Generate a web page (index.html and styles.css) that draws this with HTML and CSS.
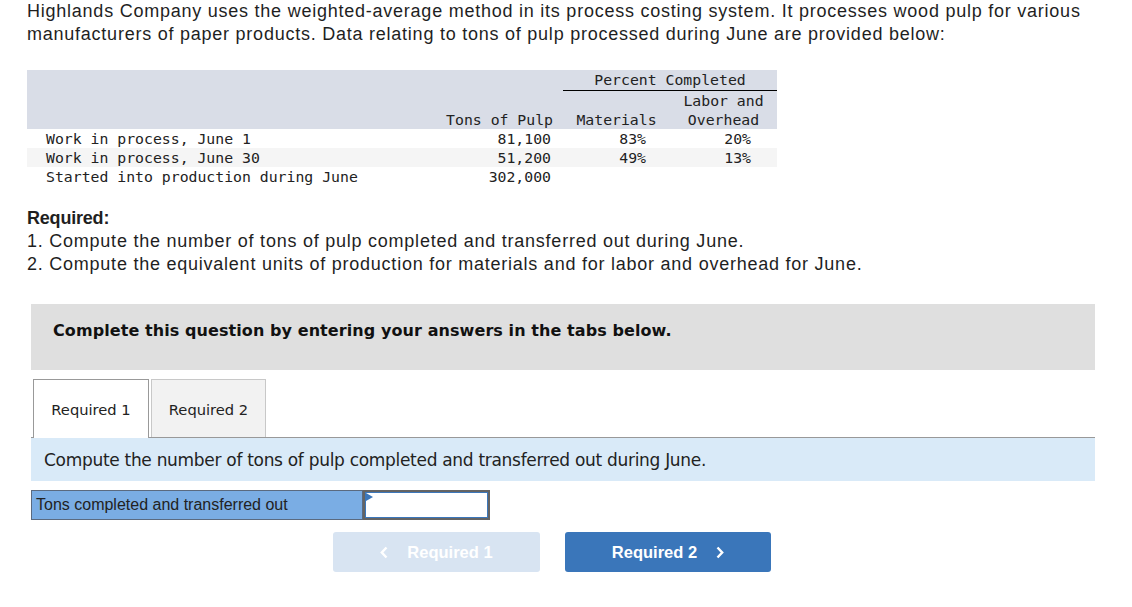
FILE: index.html
```html
<!DOCTYPE html>
<html>
<head>
<meta charset="utf-8">
<link rel="stylesheet" href="styles.css">
</head>
<body>
<p class="intro">Highlands Company uses the weighted-average method in its process costing system. It processes wood pulp for various manufacturers of paper products. Data relating to tons of pulp processed during June are provided below:</p>

<table class="data">
  <colgroup>
    <col class="c-label"><col class="c-tons"><col class="c-mat"><col class="c-lab">
  </colgroup>
  <thead>
    <tr class="h1"><th></th><th></th><th colspan="2" class="pc">Percent Completed</th></tr>
    <tr class="h2"><th></th><th></th><th></th><th class="ctr">Labor and</th></tr>
    <tr class="h3"><th></th><th class="rt">Tons of Pulp</th><th class="ctr">Materials</th><th class="ctr">Overhead</th></tr>
  </thead>
  <tbody>
    <tr><td class="lbl">Work in process, June 1</td><td class="num">81,100</td><td class="pm">83%</td><td class="pl">20%</td></tr>
    <tr class="alt"><td class="lbl">Work in process, June 30</td><td class="num">51,200</td><td class="pm">49%</td><td class="pl">13%</td></tr>
    <tr><td class="lbl">Started into production during June</td><td class="num">302,000</td><td></td><td></td></tr>
  </tbody>
</table>

<div class="required">
  <div class="req-title">Required:</div>
  <div>1. Compute the number of tons of pulp completed and transferred out during June.</div>
  <div>2. Compute the equivalent units of production for materials and for labor and overhead for June.</div>
</div>

<div class="qbox">Complete this question by entering your answers in the tabs below.</div>

<div class="tabs">
  <div class="tab active">Required 1</div>
  <div class="tab">Required 2</div>
</div>

<div class="instr">Compute the number of tons of pulp completed and transferred out during June.</div>

<div class="answer">
  <div class="ans-label">Tons completed and transferred out</div>
  <div class="ans-input"><span class="flag"></span></div>
</div>

<div class="nav">
  <div class="btn prev"><svg class="chev" width="8" height="13" viewBox="0 0 8 13"><polyline points="6.5,1.5 1.8,6.5 6.5,11.5" fill="none" stroke="#fff" stroke-width="2.4"/></svg>Required 1</div>
  <div class="btn next">Required 2<svg class="chev" width="8" height="13" viewBox="0 0 8 13"><polyline points="1.5,1.5 6.2,6.5 1.5,11.5" fill="none" stroke="#fff" stroke-width="2.4"/></svg></div>
</div>
</body>
</html>
```

FILE: styles.css
```css
html, body {
  margin: 0;
  padding: 0;
  background: #fff;
}
body {
  font-family: "Liberation Sans", Arial, sans-serif;
  color: #1f1f1f;
}
.intro {
  margin: 0;
  padding: 0 20px 0 27px;
  font-family: "Liberation Sans", Arial, sans-serif;
  font-size: 18px;
  letter-spacing: 0.76px;
  line-height: 23px;
}
.data {
  margin: 24px 0 0 27px;
  border-collapse: collapse;
  table-layout: fixed;
  width: 750px;
  font-family: "DejaVu Sans Mono", monospace;
  font-size: 14.8px;
  color: #222;
}
.c-label { width: 413px; }
.c-tons { width: 123px; }
.c-mat { width: 107px; }
.c-lab { width: 107px; }
.data th, .data td {
  padding: 0;
  font-weight: normal;
  white-space: nowrap;
  height: 19px;
  line-height: 18px;
}
.data thead tr { background: #d9dde7; }
.data thead tr.h1 th { height: 19px; line-height: 20px; }
.data th.pc {
  text-align: center;
  border-bottom: 1px solid #000;
}
.data th.ctr { text-align: center; }
.data th.rt { text-align: right; padding-right: 10px; }
.data td.lbl { padding-left: 19px; }
.data td.num { text-align: right; padding-right: 12px; }
.data td.pm { text-align: right; padding-right: 24px; }
.data td.pl { text-align: right; padding-right: 26px; }
.data tr.alt td { background: #f5f5f5; }

.required {
  margin: 21px 0 0 27px;
  font-family: "Liberation Sans", Arial, sans-serif;
  font-size: 18px;
  letter-spacing: 0.76px;
  line-height: 23px;
}
.req-title { font-weight: bold; letter-spacing: -0.2px; }

.qbox {
  margin: 28px 0 0 31px;
  width: 1064px;
  height: 66px;
  box-sizing: border-box;
  padding: 17px 0 0 22px;
  background: #dfdfdf;
  font-family: "DejaVu Sans", Verdana, sans-serif;
  font-weight: bold;
  font-size: 16px;
  letter-spacing: 0.08px;
  color: #111;
}

.tabs {
  margin: 9px 0 0 31px;
  width: 1064px;
  display: flex;
  gap: 2px;
  padding-left: 2px;
  box-sizing: border-box;
  border-bottom: 1px solid #999;
  height: 59px;
}
.tab {
  width: 115px;
  height: 58px;
  box-sizing: border-box;
  display: flex;
  align-items: center;
  justify-content: center;
  font-family: "DejaVu Sans", Verdana, sans-serif;
  font-size: 14.7px;
  color: #222;
  background: #f2f2f2;
  border: 1px solid #c8c8c8;
  border-bottom: none;
  padding-top: 1px;
}
.tab.active {
  width: 116px;
  height: 59px;
  background: #fff;
  border-color: #999;
  position: relative;
  z-index: 1;
}

.instr {
  margin-left: 31px;
  width: 1064px;
  height: 43px;
  box-sizing: border-box;
  padding: 12px 0 0 13px;
  background: #d9eaf8;
  font-family: "DejaVu Sans", Verdana, sans-serif;
  font-size: 17px;
  letter-spacing: -0.3px;
  color: #222;
}

.answer {
  margin: 9px 0 0 31px;
  display: flex;
  height: 30px;
}
.ans-label {
  width: 332px;
  box-sizing: border-box;
  background: #7aade4;
  border: 1px solid #5a6a80;
  padding: 5px 0 0 4px;
  font-family: "Liberation Sans Narrow", "Liberation Sans", Arial, sans-serif;
  font-stretch: condensed;
  font-size: 16px;
  color: #222;
}
.ans-input {
  width: 127px;
  box-sizing: border-box;
  border: 2px solid #646464;
  box-shadow: inset 0 0 0 1px #3b77bb;
  background: #fff;
  position: relative;
}
.flag {
  position: absolute;
  left: 1px;
  top: 1px;
  width: 0;
  height: 0;
  border-top: 4px solid transparent;
  border-bottom: 4px solid transparent;
  border-left: 7px solid #3b77bb;
}

.nav {
  margin: 12px 0 0 333px;
  display: flex;
  gap: 25px;
}
.btn {
  width: 207px;
  height: 40px;
  border-radius: 3px;
  display: flex;
  align-items: center;
  justify-content: center;
  font-family: "Liberation Sans", Arial, sans-serif;
  font-weight: bold;
  font-size: 16.5px;
  color: #fff;
}
.btn.prev { background: #d8e4f2; }
.btn.next { background: #3a76ba; width: 206px; }
.chev { display: block; }
.prev .chev { margin-right: 19px; }
.next .chev { margin-left: 19px; }
```
